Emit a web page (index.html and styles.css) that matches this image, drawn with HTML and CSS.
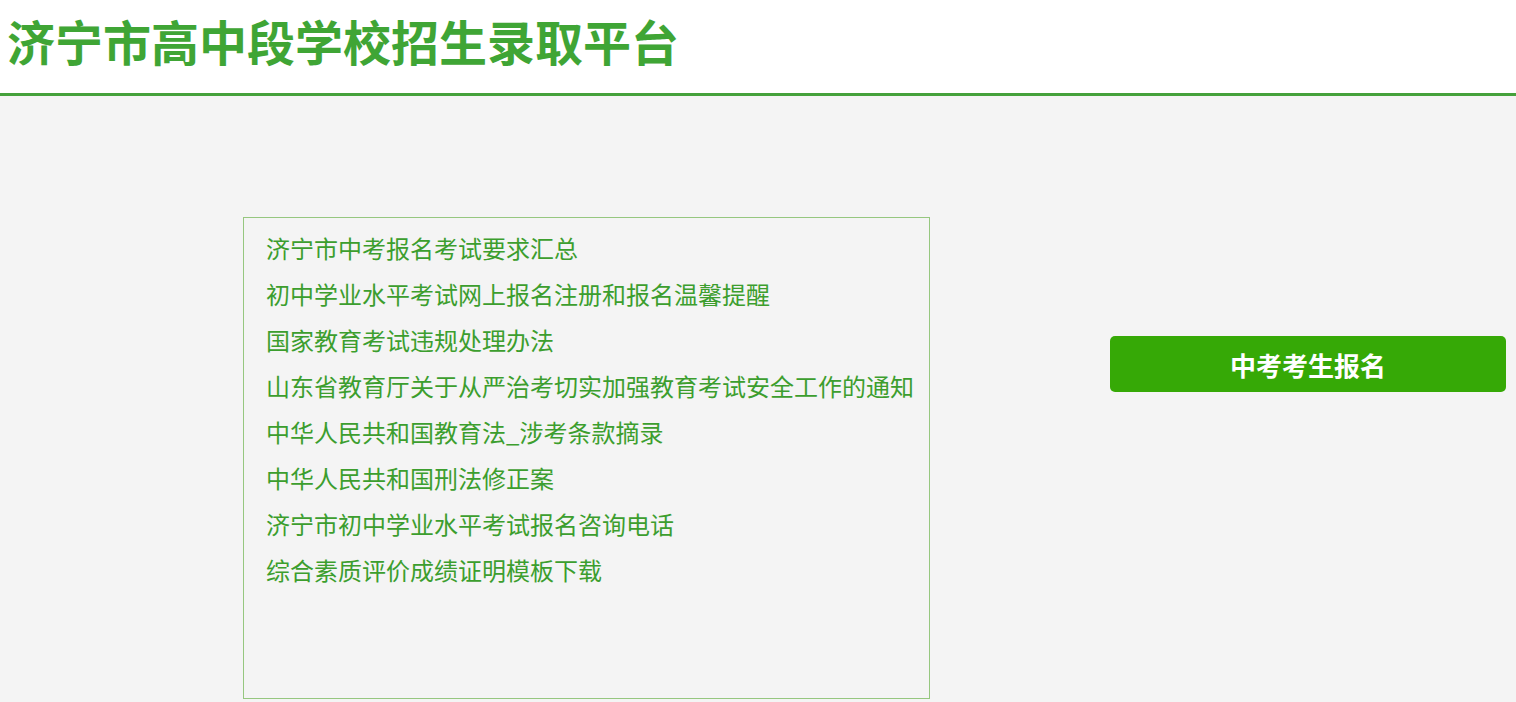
FILE: index.html
```html
<!DOCTYPE html>
<html lang="zh-CN">
<head>
<meta charset="utf-8">
<title>济宁市高中段学校招生录取平台</title>
<link rel="stylesheet" href="styles.css">
</head>
<body>
<header class="header">
  <h1 class="title">济宁市高中段学校招生录取平台</h1>
</header>
<main class="main">
  <section class="notice">
    <ul class="notice-list">
      <li><a href="#">济宁市中考报名考试要求汇总</a></li>
      <li><a href="#">初中学业水平考试网上报名注册和报名温馨提醒</a></li>
      <li><a href="#">国家教育考试违规处理办法</a></li>
      <li><a href="#">山东省教育厅关于从严治考切实加强教育考试安全工作的通知</a></li>
      <li><a href="#">中华人民共和国教育法_涉考条款摘录</a></li>
      <li><a href="#">中华人民共和国刑法修正案</a></li>
      <li><a href="#">济宁市初中学业水平考试报名咨询电话</a></li>
      <li><a href="#">综合素质评价成绩证明模板下载</a></li>
    </ul>
  </section>
  <div class="side">
    <a class="btn" href="#">中考考生报名</a>
  </div>
</main>
</body>
</html>
```
FILE: styles.css
```css
* { box-sizing: border-box; }
html, body {
  margin: 0;
  padding: 0;
  background: #f4f4f4;
  font-family: "Noto Sans CJK SC", "Noto Sans", sans-serif;
}
.header {
  background: #ffffff;
  height: 96px;
  border-bottom: 3px solid #45a13b;
  padding-left: 7px;
  display: flex;
  align-items: center;
}
.title {
  margin: 0;
  margin-top: -14px;
  font-size: 48px;
  font-weight: 700;
  color: #3fa535;
  line-height: 1;
  letter-spacing: 0;
}
.main {
  display: flex;
  align-items: flex-start;
  padding-top: 121px;
  padding-left: 243px;
}
.notice {
  width: 687px;
  height: 482px;
  border: 1px solid #96c77f;
  padding: 7px 0 0 22px;
}
.notice-list {
  list-style: none;
  margin: 0;
  padding: 0;
}
.notice-list li {
  line-height: 46px;
  font-size: 24px;
  white-space: nowrap;
}
.notice-list a {
  color: #3c9e2e;
  text-decoration: none;
}
.side {
  margin-left: 180px;
  margin-top: 119px;
}
.btn {
  display: flex;
  align-items: center;
  justify-content: center;
  width: 396px;
  height: 56px;
  border-radius: 5px;
  background: #36a906;
  color: #ffffff;
  font-size: 26px;
  font-weight: 700;
  text-decoration: none;
}
```
